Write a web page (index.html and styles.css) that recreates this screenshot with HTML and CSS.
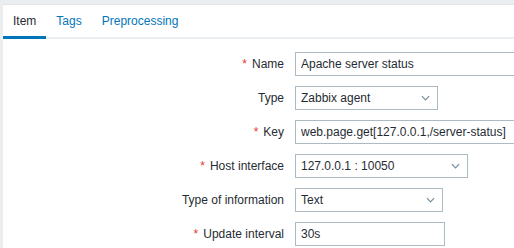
FILE: index.html
```html
<!DOCTYPE html>
<html lang="en">
<head>
    <meta charset="UTF-8">
    <title>Item</title>
    <link rel="stylesheet" href="styles.css">
</head>
<body>
    <div class="panel">
        <ul class="tabs">
            <li class="tab active">Item</li>
            <li class="tab">Tags</li>
            <li class="tab">Preprocessing</li>
        </ul>

        <div class="form-grid">
            <label class="label required">Name</label>
            <div class="field"><input class="textbox wide" type="text" value="Apache server status"></div>

            <label class="label">Type</label>
            <div class="field">
                <div class="select w-type"><span>Zabbix agent</span><svg class="chevron" viewBox="0 0 10 6"><path d="M1 1l4 4 4-4"/></svg></div>
            </div>

            <label class="label required">Key</label>
            <div class="field"><input class="textbox wide" type="text" value="web.page.get[127.0.0.1,/server-status]"></div>

            <label class="label required">Host interface</label>
            <div class="field">
                <div class="select w-host"><span>127.0.0.1 : 10050</span><svg class="chevron" viewBox="0 0 10 6"><path d="M1 1l4 4 4-4"/></svg></div>
            </div>

            <label class="label">Type of information</label>
            <div class="field">
                <div class="select w-info"><span>Text</span><svg class="chevron" viewBox="0 0 10 6"><path d="M1 1l4 4 4-4"/></svg></div>
            </div>

            <label class="label required">Update interval</label>
            <div class="field"><input class="textbox w-interval" type="text" value="30s"></div>
        </div>
    </div>
</body>
</html>
```

FILE: styles.css
```css
html, body {
    margin: 0;
    padding: 0;
}
body {
    background: #ebeef0;
    font-family: "Liberation Sans", Arial, sans-serif;
    font-size: 12px;
    color: #1f2c33;
    overflow: hidden;
    padding: 4px 0 0 3px;
    height: 248px;
    box-sizing: border-box;
}
.panel {
    background: #ffffff;
    border-top: 1px solid #dfe4e7;
    height: 100%;
    overflow: hidden;
}

/* tabs */
.tabs {
    list-style: none;
    margin: 0;
    padding: 0;
    display: flex;
    border-bottom: 2px solid #ebeef0;
}
.tab {
    padding: 9px 10px 8px;
    color: #0275b8;
    line-height: 14px;
    border-bottom: 3px solid transparent;
    margin-bottom: -2px;
}
.tab.active {
    color: #1f2c33;
    border-bottom-color: #0275b8;
}

/* form */
.form-grid {
    display: grid;
    grid-template-columns: 281px 1fr;
    column-gap: 11px;
    row-gap: 10px;
    padding-top: 13px;
}
.label {
    text-align: right;
    line-height: 24px;
    white-space: nowrap;
}
.label.required::before {
    content: "*";
    color: #e33734;
    margin-right: 5px;
}
.field {
    display: flex;
    min-width: 0;
}
.textbox {
    font: inherit;
    color: #1f2c33;
    height: 24px;
    box-sizing: border-box;
    border: 1px solid #acbbc2;
    padding: 0 5px;
    margin: 0;
    outline: none;
    background: #fff;
}
.wide {
    width: 453px;
    flex-shrink: 0;
}
.w-interval {
    width: 150px;
}
.select {
    height: 24px;
    box-sizing: border-box;
    border: 1px solid #acbbc2;
    padding: 0 5px;
    display: flex;
    align-items: center;
    justify-content: space-between;
}
.chevron {
    width: 9px;
    height: 6px;
    margin-right: 2px;
    fill: none;
    stroke: #768d99;
    stroke-width: 1.3;
}
.w-type {
    width: 143px;
}
.w-host {
    width: 173px;
}
.w-info {
    width: 148px;
}
```
